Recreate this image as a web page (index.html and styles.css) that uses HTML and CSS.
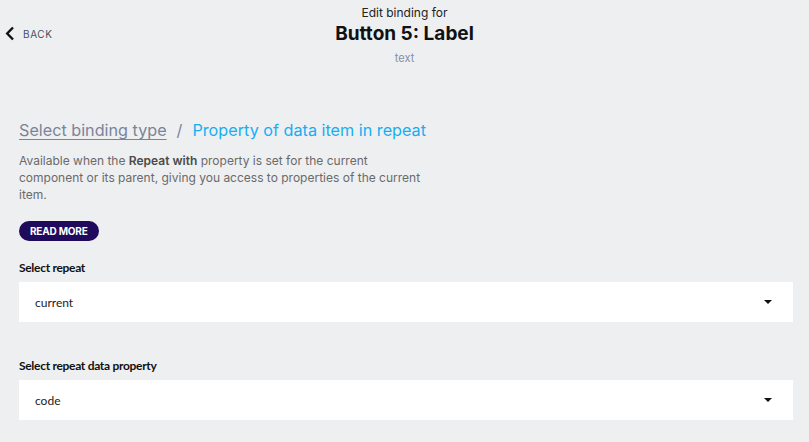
FILE: index.html
```html
<!DOCTYPE html>
<html lang="en">
<head>
  <meta charset="UTF-8" />
  <meta name="viewport" content="width=device-width, initial-scale=1.0" />
  <title>Edit binding</title>
  <link rel="stylesheet" href="styles.css">
</head>
<body>
  <header class="topbar">
    <a class="back" href="#">
      <svg width="10" height="15" viewBox="0 0 10 15"><path d="M8 1.5 L2.2 7.5 L8 13.5" fill="none" stroke="#111" stroke-width="2.4"/></svg>
      <span>BACK</span>
    </a>
    <div class="title">
      <div class="title-pre">Edit binding for</div>
      <div class="title-main">Button 5: Label</div>
      <div class="title-sub">text</div>
    </div>
    <div></div>
  </header>

  <main class="content">
    <div class="crumbs">
      <a href="#" class="crumb-link">Select binding type</a>
      <span class="crumb-sep">/</span>
      <span class="crumb-current">Property of data item in repeat</span>
    </div>

    <p class="desc">Available when the <strong>Repeat with</strong> property is set for the current component or its parent, giving you access to properties of the current item.</p>

    <button class="read-more">READ MORE</button>

    <div class="field">
      <label class="field-label">Select repeat</label>
      <div class="select">
        <span>current</span>
        <span class="caret"></span>
      </div>
    </div>

    <div class="field">
      <label class="field-label">Select repeat data property</label>
      <div class="select">
        <span>code</span>
        <span class="caret"></span>
      </div>
    </div>
  </main>
</body>
</html>
```

FILE: styles.css
```css
body {
  margin: 0;
  background: #eeeff1;
  font-family: 'Inter', sans-serif;
  color: #111;
}
.topbar {
  display: grid;
  grid-template-columns: 1fr auto 1fr;
  align-items: start;
  padding-top: 5px;
}
.back {
  display: flex;
  align-items: center;
  gap: 8px;
  margin: 21px 0 0 5px;
  text-decoration: none;
  color: #4b5060;
  font-size: 10px;
  letter-spacing: 0.6px;
}
.title { text-align: center; }
.title-pre { font-size: 12px; line-height: 15px; color: #222; }
.title-main { font-size: 19px; font-weight: 700; line-height: 27px; color: #111; }
.title-sub { font-size: 11px; line-height: 22px; color: #858ea4; }

.content {
  padding: 50px 16px 0 19px;
}
.crumbs {
  font-size: 16.2px;
  line-height: 22px;
  display: flex;
  gap: 10px;
}
.crumb-link { color: #7a8499; text-decoration: underline; text-underline-offset: 3px; }
.crumb-sep { color: #7a8499; }
.crumb-current { color: #16aef3; }

.desc {
  margin: 11px 0 0;
  max-width: 410px;
  font-size: 12px;
  line-height: 17px;
  color: #6a6a6a;
}
.desc strong { color: #4a4a4a; font-weight: 600; }

.read-more {
  margin-top: 18px;
  background: #1f0a5c;
  color: #fff;
  border: none;
  border-radius: 10px;
  height: 20px;
  padding: 0 11px;
  font-family: 'Inter', sans-serif;
  font-size: 10px;
  font-weight: 700;
  letter-spacing: -0.2px;
  cursor: pointer;
}

.field { margin-top: 19px; }
.field + .field { margin-top: 36px; }
.field-label {
  display: block;
  font-family: 'Lato', sans-serif;
  font-weight: 700;
  font-size: 12px;
  line-height: 16px;
  letter-spacing: -0.3px;
  color: #111;
  margin-bottom: 6px;
}
.select {
  display: flex;
  align-items: center;
  justify-content: space-between;
  height: 40px;
  background: #fff;
  padding: 0 21px 0 16px;
  font-family: 'Lato', sans-serif;
  font-size: 12px;
  color: #222;
}
.caret {
  width: 0;
  height: 0;
  border-left: 4px solid transparent;
  border-right: 4px solid transparent;
  border-top: 4px solid #111;
}
```
